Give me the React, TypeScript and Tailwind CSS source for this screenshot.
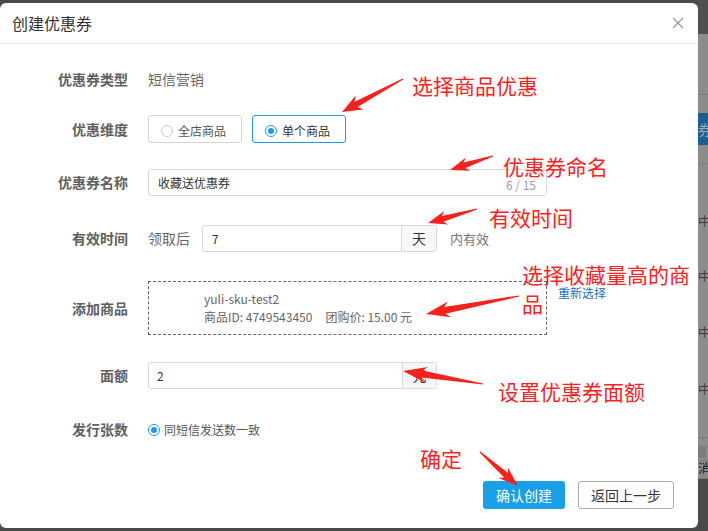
import type { ReactNode } from 'react';

const FONT = { fontFamily: '"Noto Sans CJK SC", "Noto Sans", sans-serif' };

type Arrow = { x1: number; y1: number; x2: number; y2: number; head?: number; wing?: number; neck?: number };

const arrows: Arrow[] = [
  { x1: 403, y1: 79, x2: 342, y2: 112, head: 20, wing: 8, neck: 3 },
  { x1: 493, y1: 156, x2: 450, y2: 170, head: 19, wing: 7, neck: 3 },
  { x1: 477, y1: 209, x2: 428, y2: 223, head: 19, wing: 7, neck: 3 },
  { x1: 519, y1: 296, x2: 426, y2: 314, head: 24, wing: 8, neck: 3.5 },
  { x1: 483, y1: 384, x2: 403, y2: 371, head: 24, wing: 8, neck: 3.5 },
  { x1: 480, y1: 452, x2: 518, y2: 486, head: 20, wing: 7, neck: 3 },
];

function arrowPoints({ x1, y1, x2, y2, head = 20, wing = 7, neck = 3 }: Arrow) {
  const dx = x2 - x1;
  const dy = y2 - y1;
  const len = Math.hypot(dx, dy);
  const ux = dx / len;
  const uy = dy / len;
  const nx = -uy;
  const ny = ux;
  const bx = x2 - ux * head * 0.8;
  const by = y2 - uy * head * 0.8;
  const wx = x2 - ux * head;
  const wy = y2 - uy * head;
  const pts = [
    [x1 + nx * 0.6, y1 + ny * 0.6],
    [bx + nx * neck, by + ny * neck],
    [wx + nx * wing, wy + ny * wing],
    [x2, y2],
    [wx - nx * wing, wy - ny * wing],
    [bx - nx * neck, by - ny * neck],
    [x1 - nx * 0.6, y1 - ny * 0.6],
  ];
  return pts.map(([x, y]) => `${x.toFixed(1)},${y.toFixed(1)}`).join(' ');
}

function Row({ label, top, height, children }: { label: string; top: string; height: string; children: ReactNode }) {
  return (
    <div className={`flex items-center ${top} ${height}`}>
      <div className="w-[128px] shrink-0 text-right text-[14px] font-bold text-[#606060]">{label}</div>
      <div className="ml-5 flex items-center">{children}</div>
    </div>
  );
}

function Radio({ checked }: { checked?: boolean }) {
  return checked ? (
    <span className="flex h-[12px] w-[12px] items-center justify-center rounded-full border border-[#1a9be6] bg-white">
      <span className="h-[6px] w-[6px] rounded-full bg-[#1a9be6]" />
    </span>
  ) : (
    <span className="h-[12px] w-[12px] rounded-full border border-[#c8c8c8] bg-white" />
  );
}

function SideStrip() {
  return (
    <div className="flex h-full w-[10px] flex-col text-[13px] leading-none text-[#333]">
      <div className="h-[40px] bg-[#4f4f4f]" />
      <div className="flex flex-1 flex-col bg-[#8c8c8c]">
        <div className="mt-[60px] h-px bg-[#7a7a7a]" />
        <div className="mt-[18px] flex h-[32px] items-center overflow-hidden bg-[#1b5f91] text-[14px] text-[#9ab]">券</div>
        <div className="mt-[18px] h-px bg-[#7e7e7e]" />
        <div className="mt-[50px] overflow-hidden text-[#4a3a3a]">中</div>
        <div className="mt-[42px] overflow-hidden text-[#4a3a3a]">中</div>
        <div className="mt-[43px] overflow-hidden text-[#4a3a3a]">中</div>
        <div className="mt-[44px] overflow-hidden text-[#4a3a3a]">中</div>
        <div className="mt-[42px] h-px bg-[#7a7a7a]" />
        <div className="mt-[8px] h-[12px] w-[8px] bg-[#7d7d7d]" />
        <div className="mt-[2px] h-px bg-[#7a7a7a]" />
        <div className="overflow-hidden text-[#222]">消</div>
        <div className="mt-[4px] h-px bg-[#777]" />
      </div>
      <div className="h-[62px] bg-[#4b4b4b]" />
    </div>
  );
}

export default function App() {
  return (
    <div className="relative flex h-[531px] w-[708px] overflow-hidden bg-[#4b4b4b]" style={FONT}>
      <div className="mt-[3px] flex h-[525px] w-[698px] shrink-0 flex-col rounded-[6px] bg-white">
        <div className="flex h-[41px] shrink-0 items-center justify-between border-b border-[#e6e6e6] pl-[12px] pr-[14px]">
          <span className="text-[16px] text-[#333]">创建优惠券</span>
          <svg width="12" height="12" viewBox="0 0 12 12" className="text-[#9a9a9a]">
            <path d="M1 1L11 11M11 1L1 11" stroke="currentColor" strokeWidth="1.3" />
          </svg>
        </div>

        <div className="flex flex-col">
          <Row label="优惠券类型" top="mt-[22px]" height="h-[27px]">
            <span className="text-[14px] text-[#666]">短信营销</span>
          </Row>

          <Row label="优惠维度" top="mt-[22px]" height="h-[28px]">
            <div className="flex gap-[10px]">
              <div className="flex h-[28px] w-[94px] items-center rounded-[3px] border border-[#d4d4d4] pl-[12px] pt-[3px]">
                <Radio />
                <span className="ml-[5px] text-[12px] text-[#555]">全店商品</span>
              </div>
              <div className="flex h-[28px] w-[94px] items-center rounded-[3px] border border-[#1a9be6] pl-[12px] pt-[3px]">
                <Radio checked />
                <span className="ml-[5px] text-[12px] text-[#333]">单个商品</span>
              </div>
            </div>
          </Row>

          <Row label="优惠券名称" top="mt-[26px]" height="h-[27px]">
            <div className="flex h-[27px] w-[399px] items-center justify-between rounded-[3px] border border-[#d9d9d9] pl-[9px] pr-[10px]">
              <span className="text-[12px] text-[#333]">收藏送优惠券</span>
              <span className="pt-[4px] text-[12px] text-[#999]">6 / 15</span>
            </div>
          </Row>

          <Row label="有效时间" top="mt-[29px]" height="h-[27px]">
            <span className="text-[14px] text-[#666]">领取后</span>
            <div className="ml-[12px] flex h-[27px] w-[235px] rounded-[3px] border border-[#d9d9d9]">
              <div className="flex flex-1 items-center pl-[9px] text-[12px] text-[#333]">7</div>
              <div className="flex w-[35px] items-center justify-center border-l border-[#d9d9d9] bg-[#f7f7f7] text-[14px] text-[#333]">天</div>
            </div>
            <span className="ml-[13px] text-[13px] text-[#777]">内有效</span>
          </Row>

          <Row label="添加商品" top="mt-[29px]" height="h-[54px]">
            <div className="flex h-[54px] w-[399px] flex-col justify-center border border-dashed border-[#666] pl-[55px] text-[12px] leading-[18px] text-[#666]">
              <span>yuli-sku-test2</span>
              <span>
                商品ID: 4749543450<span className="ml-[13px]">团购价: 15.00 元</span>
              </span>
            </div>
            <span className="ml-[11px] self-start pt-[3px] text-[12px] text-[#1d6fb8]">重新选择</span>
          </Row>

          <Row label="面额" top="mt-[27px]" height="h-[27px]">
            <div className="flex h-[27px] w-[289px] rounded-[3px] border border-[#d9d9d9]">
              <div className="flex flex-1 items-center pl-[8px] text-[12px] text-[#333]">2</div>
              <div className="flex w-[34px] items-center justify-center border-l border-[#d9d9d9] bg-[#f7f7f7] text-[14px] text-[#333]">元</div>
            </div>
          </Row>

          <Row label="发行张数" top="mt-[27px]" height="h-[27px]">
            <Radio checked />
            <span className="ml-[4px] text-[12px] text-[#555]">同短信发送数一致</span>
          </Row>

          <div className="mt-[38px] flex justify-end gap-[13px] pr-[24px]">
            <button className="h-[28px] w-[82px] rounded-[3px] bg-[#199fe8] text-[14px] text-white">确认创建</button>
            <button className="h-[28px] w-[96px] rounded-[3px] border border-[#aaa] bg-white text-[14px] text-[#333]">返回上一步</button>
          </div>
        </div>
      </div>

      <SideStrip />

      {/* annotation layer */}
      <svg className="pointer-events-none absolute left-0 top-0" width="708" height="531">
        {arrows.map((a, i) => (
          <polygon key={i} points={arrowPoints(a)} fill="#f5221b" />
        ))}
      </svg>
      <div className="pointer-events-none absolute left-[412px] top-[75px] text-[21px] leading-none text-[#ff2020]">选择商品优惠</div>
      <div className="pointer-events-none absolute left-[503px] top-[156px] text-[21px] leading-none text-[#ff2020]">优惠券命名</div>
      <div className="pointer-events-none absolute left-[489px] top-[207px] text-[21px] leading-none text-[#ff2020]">有效时间</div>
      <div className="pointer-events-none absolute left-[522px] top-[260px] w-[172px] text-[21px] leading-[29px] text-[#ff2020]">选择收藏量高的商品</div>
      <div className="pointer-events-none absolute left-[498px] top-[381px] text-[21px] leading-none text-[#ff2020]">设置优惠券面额</div>
      <div className="pointer-events-none absolute left-[420px] top-[448px] text-[21px] leading-none text-[#ff2020]">确定</div>
    </div>
  );
}
